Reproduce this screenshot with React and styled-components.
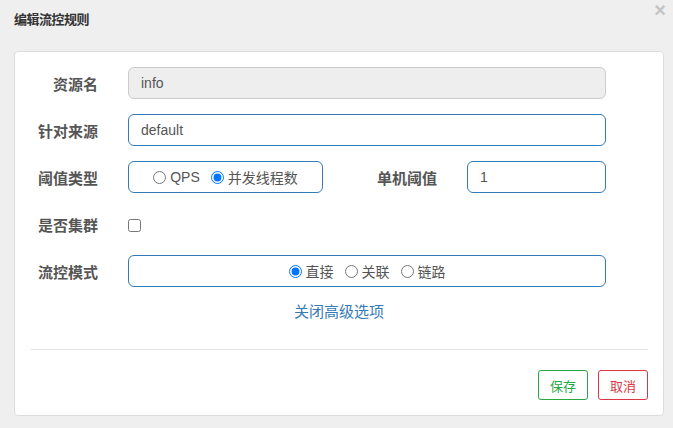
import React from 'react'
import styled, { createGlobalStyle } from 'styled-components'

const GlobalStyle = createGlobalStyle`
  html, body {
    margin: 0;
    padding: 0;
    background: #efefef;
    font-family: "Liberation Sans", Arial, "Noto Sans CJK SC", sans-serif;
    font-size: 14px;
    color: #555;
  }
`

function App() {
  return (
    <>
      <GlobalStyle />
      <Dialog>
        <Header>
          <Title>编辑流控规则</Title>
          <Close>×</Close>
        </Header>
        <Card>
          <Row>
            <Label>资源名</Label>
            <Input value="info" disabled readOnly />
          </Row>
          <Row>
            <Label>针对来源</Label>
            <Input value="default" readOnly />
          </Row>
          <Row>
            <Label>阈值类型</Label>
            <RadioBox width="195px">
              <Radio><input type="radio" name="grade" />QPS</Radio>
              <Radio><input type="radio" name="grade" defaultChecked />并发线程数</Radio>
            </RadioBox>
            <Label width="114px">单机阈值</Label>
            <Input value="1" readOnly width="139px" />
          </Row>
          <Row>
            <Label>是否集群</Label>
            <Check type="checkbox" />
          </Row>
          <Row>
            <Label>流控模式</Label>
            <RadioBox width="478px">
              <Radio><input type="radio" name="mode" defaultChecked />直接</Radio>
              <Radio><input type="radio" name="mode" />关联</Radio>
              <Radio><input type="radio" name="mode" />链路</Radio>
            </RadioBox>
          </Row>
          <ToggleLink>关闭高级选项</ToggleLink>
          <Divider />
          <Footer>
            <Button color="#28a745">保存</Button>
            <Button color="#dc3545">取消</Button>
          </Footer>
        </Card>
      </Dialog>
    </>
  )
}

export default App

const Dialog = styled.div`
  width: 673px;
  height: 428px;
  box-sizing: border-box;
  padding: 0 9px 0 14px;
`
const Header = styled.div`
  position: relative;
  height: 51px;
`
const Title = styled.h3`
  margin: 0;
  padding-top: 9px;
  font-family: "Noto Sans CJK SC", sans-serif;
  font-size: 13px;
  letter-spacing: -0.5px;
  line-height: 20px;
  font-weight: bold;
  color: #333;
`
const Close = styled.span`
  position: absolute;
  right: -2px;
  top: 0;
  line-height: 20px;
  font-family: "Liberation Sans", Arial, sans-serif;
  font-size: 20px;
  font-weight: bold;
  color: #c4c4c4;
`
const Card = styled.div`
  background: #fff;
  border: 1px solid #ddd;
  border-radius: 4px;
  height: 365px;
  box-sizing: border-box;
  padding: 15px 15px 0 0;
`
const Row = styled.div`
  display: flex;
  align-items: center;
  height: 32px;
  margin-bottom: 15px;
`
const Label = styled.label`
  width: ${p => p.width || '83px'};
  flex: none;
  text-align: right;
  margin-right: 30px;
  font-family: "Noto Sans CJK SC", sans-serif;
  font-weight: bold;
  font-size: 15px;
  color: #555;
`
const Input = styled.input`
  width: ${p => p.width || '478px'};
  height: 32px;
  box-sizing: border-box;
  padding: 0 12px;
  border: 1px solid #337ab7;
  border-radius: 6px;
  font-family: "Liberation Sans", Arial, sans-serif;
  font-size: 14px;
  color: #555;
  background: #fff;
  outline: none;
  &:disabled {
    background: #eee;
    border-color: #ccc;
    color: #555;
  }
`
const RadioBox = styled.div`
  width: ${p => p.width};
  height: 32px;
  box-sizing: border-box;
  border: 1px solid #337ab7;
  border-radius: 6px;
  display: flex;
  align-items: center;
  justify-content: center;
  gap: 11px;
`
const Radio = styled.label`
  display: flex;
  align-items: center;
  font-family: "Liberation Sans", Arial, "Noto Sans CJK SC", sans-serif;
  font-size: 14px;
  color: #555;
  input {
    margin: 0 4px 0 0;
    width: 13px;
    height: 13px;
  }
`
const Check = styled.input`
  margin: 2px 0 0 0;
  width: 13px;
  height: 13px;
`
const ToggleLink = styled.div`
  text-align: center;
  margin-top: -1px;
  padding-left: 15px;
  line-height: 20px;
  font-family: "Noto Sans CJK SC", sans-serif;
  font-size: 15px;
  color: #337ab7;
`
const Divider = styled.hr`
  margin: 28px 0 20px 15px;
  border: 0;
  border-top: 1px solid #e5e5e5;
`
const Footer = styled.div`
  display: flex;
  justify-content: flex-end;
  gap: 10px;
`
const Button = styled.button`
  width: 50px;
  height: 30px;
  border: 1px solid ${p => p.color};
  border-radius: 3px;
  background: #fff;
  color: ${p => p.color};
  font-family: "Noto Sans CJK SC", sans-serif;
  font-size: 13px;
  padding: 0;
`
